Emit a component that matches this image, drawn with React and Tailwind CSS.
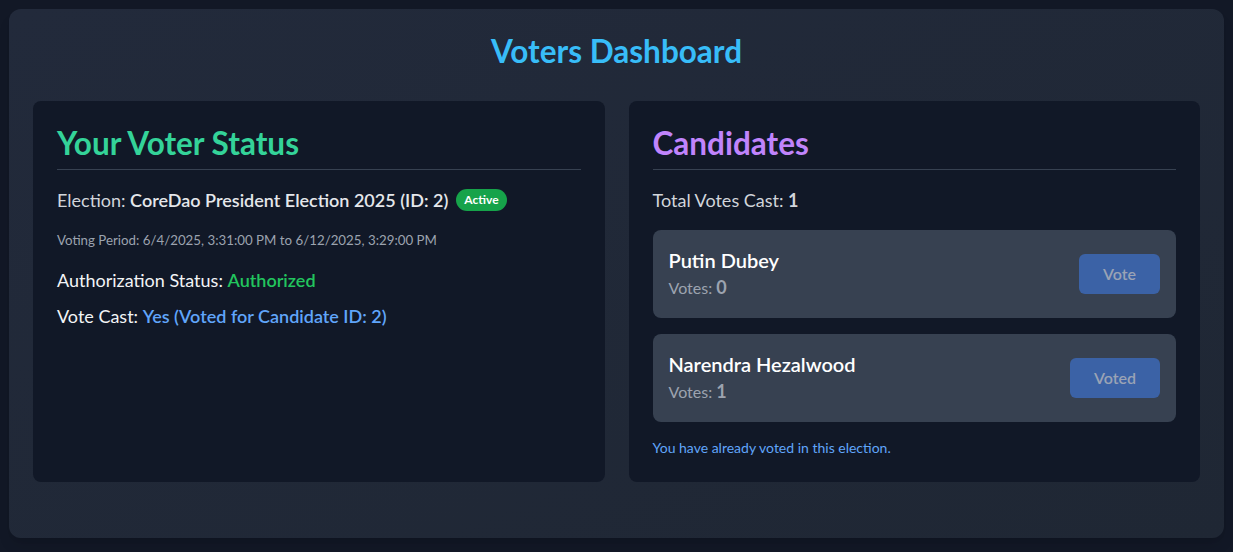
const candidates = [
  { id: 1, name: "Putin Dubey", votes: 0, label: "Vote" },
  { id: 2, name: "Narendra Hezalwood", votes: 1, label: "Voted" },
];

function CandidateCard({ c }) {
  return (
    <div className="flex items-center justify-between rounded-lg bg-[#374151] p-4">
      <div>
        <p className="text-xl font-semibold leading-7 text-white">{c.name}</p>
        <p className="text-base leading-7 text-[#9ca3af]">
          Votes: <span className="text-lg font-bold leading-none">{c.votes}</span>
        </p>
      </div>
      <button disabled className="rounded-md bg-[#3b62a6] px-6 py-2 text-base font-semibold text-[#9aa3b5]">
        {c.label}
      </button>
    </div>
  );
}

export default function App() {
  return (
    <div className="min-h-screen bg-[#121826] p-[9px]" style={{ fontFamily: 'Lato, "Noto Sans", sans-serif' }}>
      <div className="rounded-xl bg-linear-to-br from-[#222a3b] to-[#1f2734] p-6 pb-[56px] shadow-lg">
        <h1 className="mb-8 text-center text-[31.5px] font-bold leading-9 text-[#38bdf8]">Voters Dashboard</h1>

        <div className="grid grid-cols-2 gap-6">
          <div className="rounded-lg bg-[#111827] p-6">
            <h2 className="mb-4 border-b border-[#374151] pb-2 text-[31.5px] font-bold leading-9 text-[#34d399]">
              Your Voter Status
            </h2>
            <p className="mb-4 flex items-center text-lg text-[#d1d5db]">
              Election:&nbsp;<span className="font-semibold text-[#e5e7eb]">CoreDao President Election 2025 (ID: 2)</span>
              <span className="ml-2 rounded-full bg-[#16a34a] px-2 py-[3px] text-xs font-bold leading-4 text-white">Active</span>
            </p>
            <p className="mb-4 text-[13.3px] leading-5 text-[#9ca3af]">
              Voting Period: 6/4/2025, 3:31:00 PM to 6/12/2025, 3:29:00 PM
            </p>
            <p className="mb-2 text-lg text-[#f3f4f6]">
              Authorization Status: <span className="font-semibold text-[#22c55e]">Authorized</span>
            </p>
            <p className="text-lg text-[#f3f4f6]">
              Vote Cast: <span className="font-semibold text-[#60a5fa]">Yes (Voted for Candidate ID: 2)</span>
            </p>
          </div>

          <div className="rounded-lg bg-[#111827] p-6">
            <h2 className="mb-4 border-b border-[#374151] pb-2 text-[31.5px] font-bold leading-9 text-[#c084fc]">
              Candidates
            </h2>
            <p className="mb-4 text-lg text-[#d1d5db]">
              Total Votes Cast: <span className="font-bold">1</span>
            </p>
            <div className="flex flex-col gap-4">
              {candidates.map((c) => (
                <CandidateCard key={c.id} c={c} />
              ))}
            </div>
            <p className="mt-4 text-sm leading-5 text-[#60a5fa]">You have already voted in this election.</p>
          </div>
        </div>
      </div>
    </div>
  );
}
